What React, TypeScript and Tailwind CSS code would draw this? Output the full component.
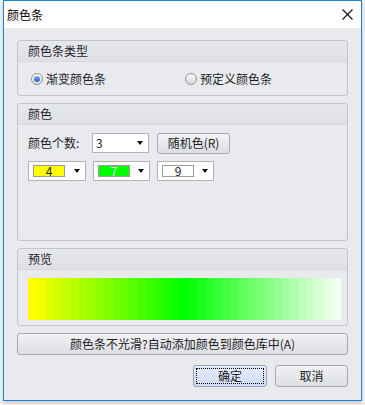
import type { ReactNode } from "react";

const FONT = "font-['Microsoft_YaHei','Noto_Sans_CJK_SC',sans-serif]";

function mix(a: number[], b: number[], t: number) {
	const c = a.map((v, i) => Math.round(v + (b[i] - v) * t));
	return `rgb(${c[0]},${c[1]},${c[2]})`;
}

// stepped preview: yellow -> green -> almost white
function bandColors() {
	const yellow = [255, 255, 0];
	const green = [0, 255, 0];
	const white = [243, 255, 240];
	const half = 18;
	const out: string[] = [];
	for (let i = 0; i < half; i++) out.push(mix(yellow, green, i / half));
	out.push(mix(green, green, 0));
	for (let i = 1; i <= half; i++) out.push(mix(green, white, i / half));
	return out;
}

function Group({ title, className, children }: { title: string; className: string; children?: ReactNode }) {
	return (
		<div className={`flex flex-col rounded-[3px] border border-[#c3c4ca] ${className}`}>
			<div className="flex h-[21px] shrink-0 items-center rounded-t-[3px] border-b border-[#d9dadf] bg-gradient-to-b from-[#e7e8ec] to-[#dfe0e5] pl-[10px] text-[12px] text-[#22222c]">
				{title}
			</div>
			{children}
		</div>
	);
}

function Arrow() {
	return <span className="h-0 w-0 border-x-[3.5px] border-t-[4px] border-x-transparent border-t-[#111]" />;
}

function Radio({ checked, label }: { checked?: boolean; label: string }) {
	return (
		<div className="flex items-center gap-[3px]">
			<span className="flex h-[12px] w-[12px] items-center justify-center rounded-full border border-[#8e939c] bg-gradient-to-b from-[#fbfbfc] to-[#d6d8de]">
				{checked ? <span className="h-[6px] w-[6px] rounded-full bg-gradient-to-b from-[#7fa6e8] to-[#2a5fc0]" /> : null}
			</span>
			<span>{label}</span>
		</div>
	);
}

function ColorCombo({ value, swatch, text, width }: { value: string; swatch: string; text: string; width: string }) {
	return (
		<div className={`flex h-[20px] ${width} items-center border border-[#b3b4b9] bg-white pl-[4px] pr-[5px]`}>
			<span className={`flex h-[12px] w-[32px] items-center justify-center border border-[#9c9c9c] text-[12px] leading-none ${swatch} ${text}`}>{value}</span>
			<span className="flex-1" />
			<Arrow />
		</div>
	);
}

export default function App() {
	const bands = bandColors();
	return (
		<div className={`h-[405px] w-[365px] bg-[#f2f2f2] ${FONT} text-[12px] text-[#1c1c26]`}>
			<div className="ml-[3px] flex h-[401px] w-[359px] flex-col border border-[#1a83d8] bg-[#e9eaee] shadow-[0_2px_4px_rgba(0,0,0,0.18)]">
				<div className="flex h-[27px] shrink-0 items-center justify-between bg-white pl-[3px] pr-[8px]">
					<span className="text-[12px] text-black">颜色条</span>
					<svg width="11" height="11" viewBox="0 0 11 11">
						<path d="M0.5 0.5 L10.5 10.5 M10.5 0.5 L0.5 10.5" stroke="#111" strokeWidth="1.1" />
					</svg>
				</div>

				<div className="flex flex-1 flex-col gap-[7px] px-[13px] pt-[12px]">
					<Group title="颜色条类型" className="h-[56px]">
						<div className="flex flex-1 items-center pl-[13px]">
							<div className="w-[154px]">
								<Radio checked label="渐变颜色条" />
							</div>
							<Radio label="预定义颜色条" />
						</div>
					</Group>

					<Group title="颜色" className="h-[138px]">
						<div className="flex flex-col gap-[8px] pl-[10px] pt-[8px]">
							<div className="flex h-[20px] items-center">
								<span className="w-[64px]">颜色个数:</span>
								<div className="flex h-[20px] w-[57px] items-center justify-between border border-[#b3b4b9] bg-white pl-[3px] pr-[5px]">
									<span>3</span>
									<Arrow />
								</div>
								<button
									type="button"
									className="ml-[8px] flex h-[21px] w-[73px] items-center justify-center rounded-[3px] border border-[#a8a9b0] bg-gradient-to-b from-[#f4f4f7] to-[#dcdde2] text-[12px]"
								>
									随机色(R)
								</button>
							</div>
							<div className="flex items-center gap-[7px]">
								<ColorCombo value="4" swatch="bg-[#ffff00]" text="text-[#222]" width="w-[58px]" />
								<ColorCombo value="7" swatch="bg-[#00ff00]" text="text-white" width="w-[57px]" />
								<ColorCombo value="9" swatch="bg-white" text="text-[#222]" width="w-[57px]" />
							</div>
						</div>
					</Group>

					<Group title="预览" className="h-[78px]">
						<div className="ml-[10px] mt-[8px] flex h-[42px] w-[313px]">
							{bands.map((c, i) => (
								<div key={i} className="h-full flex-1" style={{ background: c }} />
							))}
						</div>
					</Group>

					<button
						type="button"
						className="flex h-[22px] w-full items-center justify-center rounded-[3px] border border-[#a8a9b0] bg-gradient-to-b from-[#f1f1f4] to-[#dedfe4] text-[12px]"
					>
						颜色条不光滑?自动添加颜色到颜色库中(A)
					</button>

					<div className="mt-[3px] flex justify-end gap-[8px]">
						<button
							type="button"
							className="flex h-[22px] w-[74px] items-center justify-center rounded-[3px] border border-[#9ea3b0] bg-gradient-to-b from-[#e6edfb] to-[#cfdcf6] p-[2px] text-[12px]"
						>
							<span className="flex h-full w-full items-center justify-center border border-dotted border-black">确定</span>
						</button>
						<button
							type="button"
							className="flex h-[22px] w-[73px] items-center justify-center rounded-[3px] border border-[#a8a9b0] bg-gradient-to-b from-[#f1f1f4] to-[#dedfe4] text-[12px]"
						>
							取消
						</button>
					</div>
				</div>
			</div>
		</div>
	);
}
